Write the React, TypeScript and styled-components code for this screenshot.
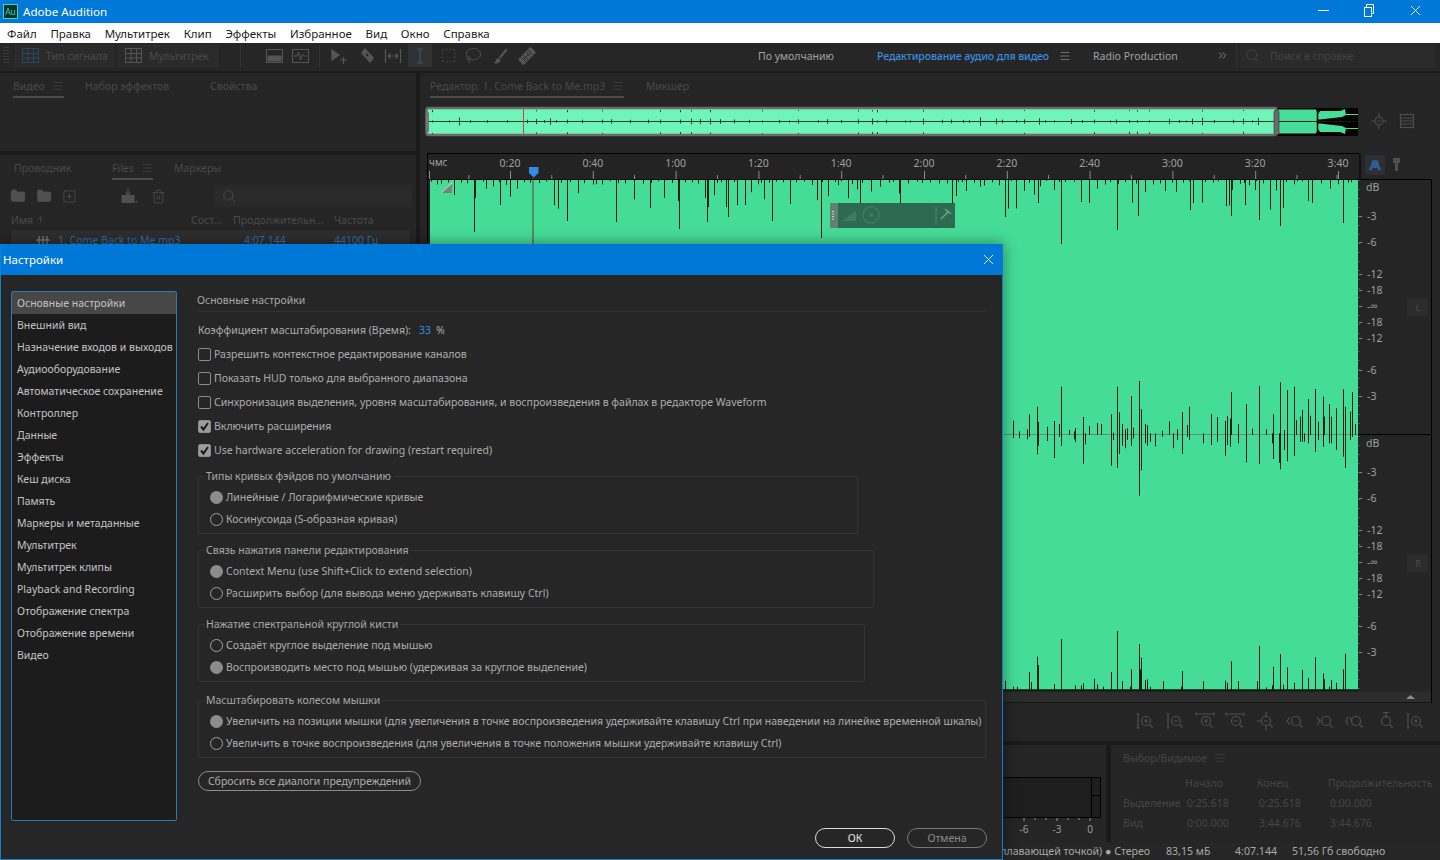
import React from "react";
import styled, { createGlobalStyle } from "styled-components";
import { Folder, FolderInput, SquarePlus, Trash2, Search, Lasso, SquareDashed, ArrowUp, X, Menu, ChevronsRight } from "lucide-react";

const FONT = `"Noto Sans", "Open Sans", "Liberation Sans", sans-serif`;

const Global = createGlobalStyle`
  html, body { margin: 0; padding: 0; background: #1a1a1a; }
  body { font-family: ${FONT}; font-size: 10.5px; }
  * { box-sizing: border-box; }
`;

const Page = styled.div`
  position: relative; width: 1440px; height: 860px; overflow: hidden;
  display: flex; flex-direction: column; background: #1a1a1a;
`;
const TitleBar = styled.div`
  height: 23px; flex: none; background: #0078d7; color: #fff; display: flex; align-items: center;
  padding-left: 3px; font-size: 11.6px;
`;
const AuLogo = styled.div`
  width: 15px; height: 15px; margin-right: 5px; background: #00332c; border: 1px solid #45d6a8;
  color: #45d6a8; font-size: 8.5px; display: flex; align-items: center; justify-content: center;
`;
const WinControls = styled.div`
  margin-left: auto; display: flex; align-items: center; color: #fff; padding-right: 2px;
`;
const WinButton = styled.div`
  width: 46px; height: 23px; display: flex; align-items: center; justify-content: center; padding-bottom: 3px;
`;
const MenuBar = styled.div`
  height: 20px; flex: none; background: #fff; display: flex; align-items: center; padding-left: 7px;
  color: #1a1a1a; font-size: 11.5px; gap: 13.7px;
`;
const Toolbar = styled.div`
  height: 29px; flex: none; background: #262626; display: flex; align-items: center; color: #555;
  border-bottom: 1px solid #1c1c1c; padding-bottom: 3px;
`;
const Gripper = styled.div`
  width: 6px; height: 18px; margin: 0 6px 0 3px;
  background: repeating-linear-gradient(to bottom, #3a3a3a 0 1px, transparent 1px 3px);
`;
const ModeButton = styled.div<{ $w: number }>`
  width: ${(p) => p.$w}px; height: 22px; display: flex; align-items: center; gap: 7px; padding-left: 6px;
  background: #2a2a2a; border: 1px solid #2f2f2f; color: #4a4a4a; margin-right: 4px;
`;
const ToolSep = styled.div<{ $m: number }>`
  width: 1px; height: 22px; background: #333; margin: 0 ${(p) => p.$m}px;
`;
const ToolSlot = styled.div<{ $w: number; $on?: boolean }>`
  width: ${(p) => p.$w}px; height: 23px; display: flex; align-items: center; justify-content: center; flex: none;
  background: ${(p) => (p.$on ? "#303234" : "transparent")};
`;
const Workspaces = styled.div`
  margin-left: auto; display: flex; align-items: center; height: 100%; color: #a3a3a3;
`;
const WorkspaceItem = styled.div<{ $w: number; $on?: boolean }>`
  width: ${(p) => p.$w}px; white-space: nowrap; color: ${(p) => (p.$on ? "#3b8de0" : "#a3a3a3")};
  font-weight: ${(p) => (p.$on ? 500 : 400)}; letter-spacing: ${(p) => (p.$on ? "-0.1px" : "0")};
`;
const HelpBox = styled.div`
  width: 195px; height: 24px; margin: 0 5px 0 3px; background: #2a2a2a; color: #454545; display: flex;
  align-items: center; gap: 10px; padding-left: 5px;
`;

const Workspace = styled.div`
  flex: 1; display: grid; grid-template-columns: 416px 1fr; column-gap: 4px; min-height: 0; padding-top: 1px;
`;
const Column = styled.div`
  display: flex; flex-direction: column; gap: 4px; min-height: 0; min-width: 0;
`;
const Panel = styled.div<{ $h?: number }>`
  background: #252525; ${(p) => (p.$h ? `height: ${p.$h}px; flex: none;` : "flex: 1;")}
  min-height: 0; min-width: 0; overflow: hidden;
`;
const Tabs = styled.div<{ $left: number }>`
  display: flex; align-items: flex-start; height: 26px; padding: 6px 0 0 ${(p) => p.$left}px; color: #4a4a4a; line-height: 14px;
`;
const Tab = styled.div<{ $w: number }>`
  width: ${(p) => p.$w}px; flex: none; white-space: nowrap; height: 19px;
`;
const TabInner = styled.div`
  display: inline-flex; align-items: flex-start; gap: 7px; height: 19px; border-bottom: 2px solid #4c4c4c;
  svg { margin-top: 1px; }
`;
const IconRow = styled.div`
  display: flex; align-items: center; height: 24px; padding-left: 10px; color: #505050; margin-top: 3px;
`;
const IconGap = styled.div<{ $w: number }>`
  width: ${(p) => p.$w}px; flex: none;
`;
const FileSearch = styled.div`
  width: 198px; height: 22px; background: #2a2a2a; display: flex; align-items: center; padding-left: 8px;
`;
const FileHead = styled.div`
  display: grid; grid-template-columns: 180px 42px 101px 1fr; height: 18px; margin-top: 3px; padding-left: 11px;
  align-items: center; color: #4a4a4a;
`;
const FileRow = styled.div`
  display: grid; grid-template-columns: 47px 186px 90px 1fr; height: 20px; margin: 1px 6px 0 11px; background: #2e2e2e;
  align-items: center; color: #2f6ea8;
`;
const FileGlyph = styled.div`
  padding-left: 25px; color: #8c8c8c; display: flex;
`;

const OverviewRow = styled.div`
  display: flex; align-items: center; height: 32px; margin-top: 6px; padding-left: 5px; color: #4d4d4d;
`;
const OverviewIcons = styled.div`
  display: flex; align-items: center; gap: 10px; margin-left: 11px;
`;
const Chart = styled.svg`
  display: block; margin: 15px 0 0 5px;
  text { font-family: ${FONT}; font-size: 10.5px; fill: #a0a0a0; }
`;
const ZoomRow = styled.div`
  display: flex; justify-content: flex-end; align-items: center; gap: 10px; height: 24px; margin-top: 1px; padding-right: 15px; color: #4f4f4f;
`;
const BottomRow = styled.div`
  flex: none; height: 97px; display: grid; grid-template-columns: 686px 1fr; column-gap: 5px;
`;
const BottomPanel = styled.div`
  background: #252525; overflow: hidden;
`;
const MeterWrap = styled.div`
  display: flex; flex-direction: column; align-items: flex-end; height: 100%; padding: 32px 5px 0 0;
`;
const Meter = styled.svg`
  display: block;
  text { font-family: ${FONT}; font-size: 10px; fill: #9a9a9a; }
`;
const Selection = styled.div`
  padding: 6px 0 0 12px; color: #454545;
`;
const SelectionTitle = styled.div`
  display: flex; align-items: center; gap: 7px; height: 14px; margin-bottom: 8px;
`;
const SelectionGrid = styled.div`
  display: grid; grid-template-columns: 62px 72px 71px 1fr; grid-auto-rows: 20px; align-items: center; white-space: nowrap;
`;
const SelectionValue = styled.span`
  padding-left: 2px;
`;
const StatusBar = styled.div`
  height: 18px; flex: none; background: #262626; display: flex; align-items: center; color: #a8a8a8; font-size: 10.6px;
  padding-left: 1000px;
`;
const StatusCell = styled.div<{ $w: number }>`
  width: ${(p) => p.$w}px; white-space: nowrap; overflow: hidden; height: 14px; line-height: 14px; flex: none;
`;

const Dialog = styled.div`
  position: absolute; left: 0; top: 244px; width: 1003px; height: 616px; background: #262626;
  border: 1px solid #1280c8; border-top: 0; box-shadow: 0 0 14px rgba(0, 0, 0, 0.45);
  display: flex; flex-direction: column;
`;
const DialogTitle = styled.div`
  height: 31px; flex: none; background: #0078d7; color: #fff; font-size: 11.5px; display: flex; align-items: center;
  padding: 0 5px 0 2px; justify-content: space-between;
`;
const DialogBody = styled.div`
  flex: 1; display: flex; min-height: 0; padding: 16px 15px 11px 10px;
`;
const Sidebar = styled.div`
  width: 166px; height: 530px; flex: none; background: #1c1c1c; border: 1px solid #2b79b5; border-radius: 2px;
`;
const SideItem = styled.div<{ $on?: boolean }>`
  height: 22px; padding-left: 5px; display: flex; align-items: center; white-space: nowrap; color: #c4c4c4;
  background: ${(p) => (p.$on ? "#474747" : "transparent")};
`;
const Main = styled.div`
  flex: 1; margin-left: 20px; display: flex; flex-direction: column; color: #adadad; min-width: 0;
`;
const Heading = styled.div`
  height: 21px; line-height: 14px; padding-top: 2px; border-bottom: 1px solid #333; color: #a8a8a8; margin-bottom: 11px;
`;
const ScaleRow = styled.div`
  display: flex; height: 14px; align-items: center; padding-left: 1px; margin-bottom: 5px; white-space: nowrap;
`;
const ScaleValue = styled.span`
  color: #2f8fe0; width: 17px; margin-left: 8px;
`;
const CheckRow = styled.div`
  height: 24px; display: flex; align-items: center; padding-left: 1px; gap: 3px; white-space: nowrap;
`;
const CheckBox = styled.div<{ $on?: boolean }>`
  width: 13px; height: 13px; border-radius: 2px; flex: none; border: 1px solid #8a8a8a;
  background: ${(p) => (p.$on ? "#9c9c9c" : "transparent")}; display: flex; align-items: center; justify-content: center;
`;
const Group = styled.fieldset<{ $w: number; $top: number }>`
  width: ${(p) => p.$w}px; margin: ${(p) => p.$top}px 0 0 1px; padding: 3px 0 3px 0; border: 1px solid #353535; border-radius: 2px;
  min-width: 0;
`;
const GroupLegend = styled.legend`
  margin-left: 5px; padding: 0 2px; height: 14px; line-height: 14px; color: #a8a8a8; white-space: nowrap;
`;
const RadioRow = styled.div`
  height: 22px; display: flex; align-items: center; padding-left: 11px; gap: 3px; white-space: nowrap;
`;
const Radio = styled.div<{ $on?: boolean }>`
  width: 13px; height: 13px; border-radius: 50%; flex: none;
  border: ${(p) => (p.$on ? "none" : "1.5px solid #a0a0a0")};
  background: ${(p) => (p.$on ? "#8c8c8c" : "transparent")};
`;
const ResetButton = styled.div`
  width: 223px; height: 20px; margin: 13px 0 0 1px; border: 1.5px solid #8c8c8c; border-radius: 10px; color: #adadad;
  display: flex; align-items: center; justify-content: center; white-space: nowrap;
`;
const Footer = styled.div`
  margin-top: auto; display: flex; justify-content: flex-end; gap: 12px;
`;
const FootButton = styled.div<{ $primary?: boolean }>`
  width: 80px; height: 20px; border-radius: 10px; border: 1.5px solid ${(p) => (p.$primary ? "#dcdcdc" : "#777")};
  color: ${(p) => (p.$primary ? "#e6e6e6" : "#8c8c8c")}; display: flex; align-items: center; justify-content: center;
`;

/* ---------- drawings ---------- */
const Ico: React.FC<{ w?: number; h?: number; children: React.ReactNode }> = ({ w = 18, h = 18, children }) => (
  <svg width={w} height={h} viewBox={`0 0 ${w} ${h}`} fill="none" stroke="currentColor" strokeWidth="1.2">{children}</svg>
);
const GridIcon: React.FC<{ c: string }> = ({ c }) => (
  <svg width="17" height="15" viewBox="0 0 17 15" fill="none" stroke={c}>
    <rect x=".5" y=".5" width="16" height="14" /><path d="M.5 5.5h16M.5 10h16M6 .5v14M11.500 .5v14" />
  </svg>
);
const RestoreIcon = () => (
  <svg width="10" height="13" viewBox="0 0 10 13" fill="none" stroke="#fff">
    <rect x=".5" y="3.5" width="7" height="9" /><path d="M2.500 3V.5h7v9H8" />
  </svg>
);
const MinIcon = () => <svg width="11" height="3" viewBox="0 0 11 3"><path d="M0 1.500h11" stroke="#fff" /></svg>;
const MoveIcon = () => (
  <Ico><path d="M2 3l7 5-7 5z" fill="currentColor" /><path d="M10 13h7M13.500 10v7" /></Ico>
);
const RazorIcon = () => (
  <Ico><path d="M7 1l9 10-4 5L3 6z" fill="currentColor" stroke="none" /><path d="M8 7l2 2" stroke="#262626" strokeWidth="2" /></Ico>
);
const TimeIcon = () => (
  <Ico><path d="M1.500 2v14M16.500 2v14M4 9h10M4 9l2.500-2.500M4 9l2.500 2.500M14 9l-2.500-2.500M14 9l-2.500 2.500" /></Ico>
);
const IBeamIcon = () => (
  <Ico><path d="M6 2h6M6 16h6M9 2v14" stroke="#3a4e5e" strokeWidth="1.500" /></Ico>
);
const BrushIcon = () => (
  <Ico><path d="M15 1.500L8 10l1.500 1.500L16.500 3z" fill="currentColor" stroke="none" /><path d="M7.500 11c-3 0-2 4-5 5 3 1 7 0 7-3z" fill="currentColor" stroke="none" /></Ico>
);
const HealIcon = () => (
  <Ico>
    <g transform="rotate(-45 9 9)">
      <rect x="0" y="5" width="18" height="8" rx="1.500" fill="currentColor" stroke="none" />
      <path d="M4 5v8M7 5v8M11 5v8M14 5v8M4 9h10" stroke="#262626" strokeWidth=".8" />
    </g>
  </Ico>
);
const SpecIcon: React.FC<{ wave?: boolean }> = ({ wave }) => (
  <svg width="17" height="14" viewBox="0 0 17 14" fill="none" stroke="currentColor">
    <rect x=".5" y=".5" width="16" height="13" />
    {wave ? <path d="M2 7h3l1.500-4 2 8 2-6 1 2h3.500" /> : <rect x="2" y="7" width="13" height="5" fill="currentColor" />}
  </svg>
);
const ImportIcon = () => (
  <Ico><rect x="1.500" y="8" width="13" height="8" fill="currentColor" stroke="none" /><path d="M8 1v7M5.500 5.500L8 8l2.500-2.500M1.500 11h13M5 8v8" /><path d="M15 14h3l-1.500 2z" fill="currentColor" stroke="none" /></Ico>
);
const WaveGlyph = () => (
  <svg width="14" height="10" viewBox="0 0 14 10" fill="none" stroke="currentColor"><path d="M0 5h14M3 1v8M7 1v8M11 1v8" /></svg>
);
const MiniMenu = () => <Menu size={12} strokeWidth={1.2} />;

const ZoomIcon: React.FC<{ kind: number }> = ({ kind }) => (
  <Ico w={20} h={20}>
    <circle cx="11" cy="10" r="4.500" />
    <path d="M14.500 13.500l3 3" />
    {kind === 0 && <path d="M3 3v14M1.500 3h3M1.500 17h3M9 10h4M11 8v4" />}
    {kind === 1 && <path d="M3 3v14M1.500 3h3M1.500 17h3M9 10h4" />}
    {kind === 2 && <path d="M1 3h18M1 1.500v3M19 1.500v3M9 10h4M11 8v4" />}
    {kind === 3 && <path d="M1 3h18M1 1.500v3M19 1.500v3M9 10h4" />}
    {kind === 4 && <path d="M11 1v4M11 15v4M2 10h4M9 10h4" />}
    {kind === 5 && <path d="M5 6l-3 4 3 4" />}
    {kind === 6 && <path d="M2 6l3 4-3 4" />}
    {kind === 7 && <path d="M3 6l-2 4 2 4M5 6l2 4" />}
    {kind === 8 && <path d="M11 2v5M8 1.500h6" />}
    {kind === 9 && <path d="M3 3v14M1.500 3h3M1.500 17h3M9 10h4M11 8v4" />}
  </Ico>
);

/* ---------- waveform data ---------- */
const rng = (seed: number) => () => {
  seed = (seed * 1664525 + 1013904223) % 4294967296;
  return seed / 4294967296;
};
const CENTER: [number, number, number][] = [
  [38,452,504],[58,484,505],[80,478,508],[88,433,500],[110,410,553],[115,456,527],[142,470,513],[163,453,564],[178,462,500],[184,350,527],
  [206,480,495],[222,484,508],[226,474,516],[248,441,581],[256,490,523],[268,468,495],[290,459,495],[304,462,495],[332,433,587],[340,488,510],
  [352,350,594],[358,427,552],[366,462,527],[374,478,535],[380,475,510],[394,378,527],[400,473,505],[416,333,677],[424,418,601],[436,462,520],
  [442,466,527],[450,490,515],[464,490,529],[486,482,500],[506,454,495],[520,490,535],[530,478,510],[547,426,551],[562,465,500],[568,410,510],
  [610,490,520],[632,432,525],[652,441,515],[674,453,557],[682,438,525],[689,446,530],[694,366,495],[715,462,520],[737,402,577],[757,476,495],
  [778,348,582],[799,478,495],[815,490,520],[820,433,567],[836,490,578],[841,337,598],[852,480,540],[862,360,574],[883,350,558],[889,450,495],
  [899,440,515],[905,420,515],[912,490,515],[925,387,520],[931,437,495],[946,357,545],[953,455,510],[968,380,530],[973,440,495],[988,403,520],
  [994,440,520],[1009,415,540],[1030,358,560],[1036,410,594],[1051,425,510],[1057,366,500],[1066,462,495],
];
const BOTTOM: [number, number][] = [
  [16,1232],[40,1250],[52,1250],[88,1206],[94,1236],[110,1160],[115,1186],[163,1242],[184,1107],[226,1246],[242,1246],[248,1240],[283,1226],
  [290,1243],[310,1250],[332,1206],[352,1083],[367,1234],[389,1250],[394,1198],[416,1122],[421,1198],[424,1163],[436,1230],[442,1228],[450,1250],
  [488,1234],[543,1250],[547,1203],[610,1234],[674,1232],[682,1238],[694,1174],[715,1234],[772,1234],[778,1128],[799,1252],[815,1246],[820,1190],
  [841,1152],[850,1244],[862,1192],[883,1238],[905,1200],[925,1224],[946,1162],[968,1210],[973,1228],[988,1250],[994,1230],[1009,1238],[1030,1198],[1036,1151],
];
const LONG_TOP: [number, number][] = [
  [1061,244],[772,221],[728,217],[821,238],[1005,217],[1117,230],[1280,226],[1138,216],[1343,223],[956,196],[1038,203],[1231,216],
  [474,232],[567,221],[616,222],[679,229],[707,222],[1245,205],[1255,190],[1259,220],[1190,210],[900,205],[860,212],[790,204],[500,205],[650,208],[745,205],
];
const topPath = (() => {
  const r = rng(77);
  let d = "";
  let x = 431;
  while (x < 1358) {
    const t = r();
    const depth = 1 + t * t * t * t * 28 + r() * 2;
    d += `M${x + 0.5} 180v${depth.toFixed(1)}`;
    x += 3 + Math.floor(r() * 7);
  }
  LONG_TOP.forEach(([lx, ly]) => { d += `M${lx + 0.5} 180V${ly}`; });
  return d;
})();
const centerPath = CENTER.map(([x, a, b]) => `M${1000 + Math.round(x / 3) + 0.5} ${(270 + a / 3).toFixed(1)}V${(270 + b / 3).toFixed(1)}`).join("");
const bottomPath = BOTTOM.map(([x, a]) => `M${1000 + Math.round(x / 3) + 0.5} ${(270 + a / 3).toFixed(1)}V690`).join("");

const overviewPath = (() => {
  const r = rng(31);
  let d = "";
  for (let x = 432; x < 1276; x += 5 + Math.floor(r() * 16)) {
    const h = 1 + r() * r() * 3.5;
    d += `M${x + 0.5} ${(121.5 - h).toFixed(1)}V${(121.5 + h).toFixed(1)}`;
    if (r() < 0.25) d += `M${x + 0.5} 110v${(1 + r() * 1.5).toFixed(1)}M${x + 0.5} 134v-${(1 + r() * 1.5).toFixed(1)}`;
  }
  return d;
})();

const RULER = ["0:20", "0:40", "1:00", "1:20", "1:40", "2:00", "2:20", "2:40", "3:00", "3:20", "3:40"];
const DB: [string, number][] = [
  ["dB", 187], ["-3", 216], ["-6", 242], ["-12", 274], ["-18", 290], ["-∞", 306], ["-18", 322], ["-12", 338], ["-6", 370], ["-3", 396],
  ["dB", 443], ["-3", 472], ["-6", 498], ["-12", 530], ["-18", 546], ["-∞", 562], ["-18", 578], ["-12", 594], ["-6", 626], ["-3", 652],
];

const Overview = () => (
  <svg width="934" height="32" viewBox="425 105 934 32" style={{ display: "block" }}>
    <rect x="1276" y="108" width="82" height="28" fill="#000" />
    <path d="M1277 109.500H1316L1318 114L1320 111H1340L1345 109L1346 115L1342 117L1320 119.500H1277Z" fill="#45dd98" />
    <path d="M1277 133.500H1316L1318 129L1320 132H1340L1345 134L1346 128L1342 126L1320 123.500H1277Z" fill="#45dd98" />
    <rect x="1277" y="119" width="40" height="5" fill="#45dd98" />
    <path d="M1346 114.500h12M1346 128.500h12" stroke="#45dd98" />
    <path d="M1317.500 108v28" stroke="#000" strokeWidth="1.500" />
    <path d="M1277 121.500H1358" stroke="#0b1f14" />
    <rect x="426.500" y="108" width="850" height="27" rx="2" fill="#6ff5b7" stroke="#6b6b6b" strokeWidth="2.500" />
    <path d="M429 121.500H1276" stroke="#1c3b2b" />
    <path d={overviewPath} stroke="#1c3b2b" />
    <path d="M523.500 109v26" stroke="#c24848" />
    <rect x="426" y="112" width="3" height="20" rx="1" fill="#777" />
    <rect x="1274" y="110" width="5" height="25" rx="2" fill="#6b6b6b" stroke="#333" strokeWidth=".6" />
  </svg>
);

const WaveChart = () => (
  <Chart width="1012" height="556" viewBox="425 152 1012 556">
    <rect x="427" y="153" width="933" height="27" fill="#232323" />
    <path d="M427 153.500H1360M1360 153V179M427 179.500H1431.500V702M427 702.500H1432M427.500 153V702" stroke="#000" fill="none" />
    <text x="429" y="166" style={{ fontSize: 10 }}>чмс</text>
    {RULER.map((t, i) => (
      <g key={t}>
        <text x={510 + i * 82.8} y="167" textAnchor="middle">{t}</text>
        <path d={`M${510.5 + i * 82.8} 171v8M${469 + i * 82.8} 175v4`} stroke="#8c8c8c" />
      </g>
    ))}
    <path d="M1337 175v4M429.500 171v8" stroke="#8c8c8c" />
    <rect x="430" y="180" width="928" height="511" fill="#45dc98" />
    <path d={topPath} stroke="#0b1f14" strokeWidth="1" />
    <path d="M1004 434.500H1358" stroke="#5d8f74" />
    <path d={centerPath} stroke="#0b1f14" strokeWidth="1" />
    <path d={bottomPath} stroke="#0b1f14" strokeWidth="1" />
    <path d="M430 690.500H1358" stroke="#0a1a10" strokeWidth="2.500" />
    <path d="M1358 434.500H1431" stroke="#000" />
    <path d="M533 178V244" stroke="#6a3a30" />
    <path d="M529 167h9.500v6l-4.750 4.500L529 173z" fill="#2f8de8" />
    <path d="M452 183v10h-12z" fill="#6f8a7c" /><path d="M452 183L441 193" stroke="#ddd" />
    <rect x="830" y="203" width="125" height="25" fill="#2e6a52" />
    <rect x="830" y="203" width="8" height="25" fill="#5f8273" />
    <path d="M833 211v10" stroke="#d0d0d0" strokeDasharray="1 1.500" strokeWidth="2" />
    <path d="M842 221l14-10v10z" fill="#3f7a62" />
    <circle cx="871" cy="215" r="8" fill="none" stroke="#3f7a62" strokeWidth="1.500" /><circle cx="871" cy="215" r="2" fill="#3f7a62" />
    <path d="M936 207v18" stroke="#5f8273" />
    <path d="M941 219l8-8M945 209l6 5" stroke="#7a9b8b" strokeWidth="1.500" />
    {DB.map(([t, y], i) => (
      <g key={i}>
        <text x={t === "dB" ? 1366 : 1367} y={y + 4}>{t}</text>
        {t !== "dB" && <path d={`M1359 ${y + 0.5}h3`} stroke="#8c8c8c" />}
      </g>
    ))}
    <path d="M1359 180V432" stroke="#777" strokeWidth="1" strokeDasharray="1 8" />
    <path d="M1359 436V690" stroke="#777" strokeWidth="1" strokeDasharray="1 8" />
    <rect x="1407" y="298" width="21" height="18" rx="2" fill="#2c2c2c" />
    <text x="1418" y="311" textAnchor="middle" style={{ fill: "#4b4b4b", fontSize: 9 }}>L</text>
    <rect x="1407" y="554" width="21" height="18" rx="2" fill="#2c2c2c" />
    <text x="1418" y="567" textAnchor="middle" style={{ fill: "#4b4b4b", fontSize: 9 }}>R</text>
    <rect x="1365" y="155" width="20" height="20" rx="2" fill="#2c2f33" />
    <path d="M1369 170a6 6 0 1 1 12 0h-3a3 3 0 0 0-6 0z" fill="#2f5f92" /><circle cx="1375" cy="164" r="4" fill="#2f5f92" />
    <path d="M1393 158h7v5h-2v8h-3v-8h-2z" fill="#4f4f4f" />
    <rect x="428" y="691.500" width="1003" height="11" fill="#2c2c2c" />
    <path d="M1406 699h9l-4.500-4z" fill="#8a8a8a" />
  </Chart>
);

const SIDE = ["Основные настройки", "Внешний вид", "Назначение входов и выходов", "Аудиооборудование", "Автоматическое сохранение", "Контроллер", "Данные", "Эффекты", "Кеш диска", "Память", "Маркеры и метаданные", "Мультитрек", "Мультитрек клипы", "Playback and Recording", "Отображение спектра", "Отображение времени", "Видео"];
const CHECKS: [string, boolean][] = [
  ["Разрешить контекстное редактирование каналов", false],
  ["Показать HUD только для выбранного диапазона", false],
  ["Синхронизация выделения, уровня масштабирования, и воспроизведения в файлах в редакторе Waveform", false],
  ["Включить расширения", true],
  ["Use hardware acceleration for drawing (restart required)", true],
];
const GROUPS: { w: number; top: number; title: string; on: number; rows: string[] }[] = [
  { w: 660, top: 7, title: "Типы кривых фэйдов по умолчанию", on: 0, rows: ["Линейные / Логарифмические кривые", "Косинусоида (S-образная кривая)"] },
  { w: 676, top: 9, title: "Связь нажатия панели редактирования", on: 0, rows: ["Context Menu (use Shift+Click to extend selection)", "Расширить выбор (для вывода меню удерживать клавишу Ctrl)"] },
  { w: 667, top: 9, title: "Нажатие спектральной круглой кисти", on: 1, rows: ["Создаёт круглое выделение под мышью", "Воспроизводить место под мышью (удерживая за круглое выделение)"] },
  { w: 788, top: 11, title: "Масштабировать колесом мышки", on: 0, rows: ["Увеличить на позиции мышки (для увеличения в точке воспроизведения удерживайте клавишу Ctrl при наведении на линейке временной шкалы)", "Увеличить в точке воспроизведения (для увеличения в точке положения мышки удерживайте клавишу Ctrl)"] },
];
const MENU = ["Файл", "Правка", "Мультитрек", "Клип", "Эффекты", "Избранное", "Вид", "Окно", "Справка"];

export default function App() {
  return (
    <Page>
      <Global />
      <TitleBar>
        <AuLogo>Au</AuLogo>
        Adobe Audition
        <WinControls>
          <WinButton><MinIcon /></WinButton>
          <WinButton><RestoreIcon /></WinButton>
          <WinButton><X size={17} strokeWidth={1.2} /></WinButton>
        </WinControls>
      </TitleBar>
      <MenuBar>{MENU.map((m) => <span key={m}>{m}</span>)}</MenuBar>
      <Toolbar>
        <Gripper />
        <ModeButton $w={99}><GridIcon c="#2c4660" />Тип сигнала</ModeButton>
        <ModeButton $w={100}><GridIcon c="#555" />Мультитрек</ModeButton>
        <ToolSep $m={18} />
        <IconGap $w={5} />
        <ToolSlot $w={20}><SpecIcon /></ToolSlot>
        <IconGap $w={6} />
        <ToolSlot $w={20}><SpecIcon wave /></ToolSlot>
        <ToolSep $m={9} />
        <ToolSlot $w={20}><MoveIcon /></ToolSlot>
        <IconGap $w={8} />
        <ToolSlot $w={20}><RazorIcon /></ToolSlot>
        <IconGap $w={6} />
        <ToolSlot $w={20}><TimeIcon /></ToolSlot>
        <IconGap $w={5} />
        <ToolSlot $w={24} $on><IBeamIcon /></ToolSlot>
        <IconGap $w={6} />
        <ToolSlot $w={20}><SquareDashed size={17} strokeWidth={1.2} /></ToolSlot>
        <IconGap $w={5} />
        <ToolSlot $w={20}><Lasso size={17} strokeWidth={1.2} /></ToolSlot>
        <IconGap $w={7} />
        <ToolSlot $w={20}><BrushIcon /></ToolSlot>
        <IconGap $w={7} />
        <ToolSlot $w={20}><HealIcon /></ToolSlot>
        <Workspaces>
          <WorkspaceItem $w={119}>По умолчанию</WorkspaceItem>
          <WorkspaceItem $w={180} $on>Редактирование аудио для видео</WorkspaceItem>
          <IconGap $w={2} />
          <ToolSlot $w={12}><MiniMenu /></ToolSlot>
          <IconGap $w={22} />
          <WorkspaceItem $w={122}>Radio Production</WorkspaceItem>
          <ToolSlot $w={14}><ChevronsRight size={13} strokeWidth={1.4} /></ToolSlot>
          <IconGap $w={7} />
          <ToolSep $m={0} />
          <HelpBox><Search size={15} strokeWidth={1.4} />Поиск в справке</HelpBox>
        </Workspaces>
      </Toolbar>
      <Workspace>
        <Column>
          <Panel $h={78}>
            <Tabs $left={13}>
              <Tab $w={72}><TabInner>Видео <MiniMenu /></TabInner></Tab>
              <Tab $w={125}>Набор эффектов</Tab>
              <Tab $w={80}>Свойства</Tab>
            </Tabs>
          </Panel>
          <Panel>
            <Tabs $left={14}>
              <Tab $w={98}><span>Проводник</span></Tab>
              <Tab $w={62}><TabInner>Files <MiniMenu /></TabInner></Tab>
              <Tab $w={70}>Маркеры</Tab>
            </Tabs>
            <IconRow>
              <Folder size={16} strokeWidth={1.2} fill="currentColor" />
              <IconGap $w={10} />
              <FolderInput size={16} strokeWidth={1.2} fill="currentColor" />
              <IconGap $w={10} />
              <SquarePlus size={15} strokeWidth={1.2} />
              <IconGap $w={43} />
              <ImportIcon />
              <IconGap $w={13} />
              <Trash2 size={15} strokeWidth={1.2} />
              <IconGap $w={48} />
              <FileSearch><Search size={14} strokeWidth={1.3} /></FileSearch>
            </IconRow>
            <FileHead>
              <span>Имя <ArrowUp size={9} strokeWidth={2} /></span>
              <span>Сост...</span>
              <span>Продолжительн...</span>
              <span>Частота</span>
            </FileHead>
            <FileRow>
              <FileGlyph><WaveGlyph /></FileGlyph>
              <span>1. Come Back to Me.mp3</span>
              <span>4:07.144</span>
              <span>44100 Гц</span>
            </FileRow>
          </Panel>
        </Column>
        <Column>
          <Panel>
            <Tabs $left={10}>
              <Tab $w={216}><TabInner>Редактор: 1. Come Back to Me.mp3 <MiniMenu /></TabInner></Tab>
              <Tab $w={60}>Микшер</Tab>
            </Tabs>
            <OverviewRow>
              <Overview />
              <OverviewIcons>
                <Ico><circle cx="9" cy="9" r="4" /><path d="M9 1v4M9 13v4M1 9h4M13 9h4M7 9h4" /></Ico>
                <Ico><rect x="2.500" y="2.500" width="13" height="13" /><path d="M2.500 6h13M2.500 9h13M2.500 12h13" /></Ico>
              </OverviewIcons>
            </OverviewRow>
            <WaveChart />
            <ZoomRow>
              {[0, 1, 2, 3, 4, 5, 6, 7, 8, 9].map((k) => <ZoomIcon key={k} kind={k} />)}
            </ZoomRow>
          </Panel>
          <BottomRow>
            <BottomPanel>
              <MeterWrap>
                <Meter width="100" height="62" viewBox="1001 777 100 62">
                  <rect x="1001" y="777.500" width="99.500" height="40" fill="#1e1e1e" stroke="#000" />
                  <path d="M1091.500 777v40M1091 795.500h9" stroke="#000" />
                  <path d="M1024 818v3M1035 818v2M1046 818v2M1057 818v3M1068 818v2M1079 818v2M1090 818v3" stroke="#9a9a9a" />
                  <text x="1024" y="833" textAnchor="middle">-6</text>
                  <text x="1057" y="833" textAnchor="middle">-3</text>
                  <text x="1090" y="833" textAnchor="middle">0</text>
                </Meter>
              </MeterWrap>
            </BottomPanel>
            <BottomPanel>
              <Selection>
                <SelectionTitle>Выбор/Видимое <MiniMenu /></SelectionTitle>
                <SelectionGrid>
                  <span /><span>Начало</span><span>Конец</span><span>Продолжительность</span>
                  <span>Выделение</span><SelectionValue>0:25.618</SelectionValue><SelectionValue>0:25.618</SelectionValue><SelectionValue>0:00.000</SelectionValue>
                  <span>Вид</span><SelectionValue>0:00.000</SelectionValue><SelectionValue>3:44.676</SelectionValue><SelectionValue>3:44.676</SelectionValue>
                </SelectionGrid>
              </Selection>
            </BottomPanel>
          </BottomRow>
        </Column>
      </Workspace>
      <StatusBar>
        <StatusCell $w={166}>плавающей точкой) ● Стерео</StatusCell>
        <StatusCell $w={69}>83,15 мБ</StatusCell>
        <StatusCell $w={57}>4:07.144</StatusCell>
        <StatusCell $w={110}>51,56 Гб свободно</StatusCell>
      </StatusBar>

      <Dialog>
        <DialogTitle>Настройки<X size={17} strokeWidth={1.2} /></DialogTitle>
        <DialogBody>
          <Sidebar>
            {SIDE.map((s, i) => <SideItem key={s} $on={i === 0}>{s}</SideItem>)}
          </Sidebar>
          <Main>
            <Heading>Основные настройки</Heading>
            <ScaleRow>Коэффициент масштабирования (Время):<ScaleValue>33</ScaleValue>%</ScaleRow>
            {CHECKS.map(([t, on]) => (
              <CheckRow key={t}>
                <CheckBox $on={on}>
                  {on && <svg width="11" height="11" viewBox="0 0 11 11" fill="none" stroke="#1a1a1a" strokeWidth="2"><path d="M2 5.500l2.500 3L9 2" /></svg>}
                </CheckBox>
                {t}
              </CheckRow>
            ))}
            {GROUPS.map((g) => (
              <Group key={g.title} $w={g.w} $top={g.top}>
                <GroupLegend>{g.title}</GroupLegend>
                {g.rows.map((r, i) => (
                  <RadioRow key={r}><Radio $on={i === g.on} />{r}</RadioRow>
                ))}
              </Group>
            ))}
            <ResetButton>Сбросить все диалоги предупреждений</ResetButton>
            <Footer>
              <FootButton $primary>ОК</FootButton>
              <FootButton>Отмена</FootButton>
            </Footer>
          </Main>
        </DialogBody>
      </Dialog>
    </Page>
  );
}
